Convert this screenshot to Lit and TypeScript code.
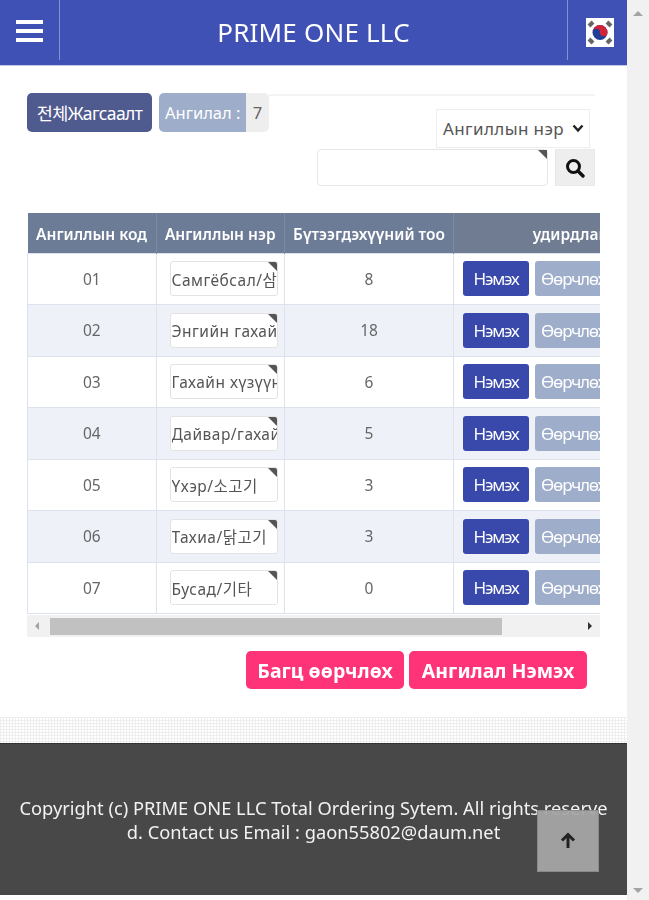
import { LitElement, html, css } from "lit";
import { customElement } from "lit/decorators.js";

const ROWS = [
  ["01", "Самгёбсал/삼겹살", "8"],
  ["02", "Энгийн гахайн мах", "18"],
  ["03", "Гахайн хүзүүний мах", "6"],
  ["04", "Дайвар/гахайн мах", "5"],
  ["05", "Үхэр/소고기", "3"],
  ["06", "Тахиа/닭고기", "3"],
  ["07", "Бусад/기타", "0"],
];

@customElement("app-root")
export class AppRoot extends LitElement {
  static styles = css`
    :host { display: block; height: 900px; overflow: hidden; background: #fff; color: #555;
      font-family: "Noto Sans", "Noto Sans CJK KR", sans-serif; font-size: 15px; }
    * { box-sizing: border-box; }
    .shell { display: flex; height: 900px; filter: blur(0.35px); }
    .page { width: 627px; flex: none; position: relative; }
    .vbar { flex: 1; background: #f1f1f1; display: flex; flex-direction: column; justify-content: space-between; align-items: center; padding: 11px 0 7px; }
    .up { width: 0; height: 0; border: 5px solid transparent; border-top: 0; border-bottom: 5px solid #a3a3a3; }
    .down { width: 0; height: 0; border: 5px solid transparent; border-bottom: 0; border-top: 5px solid #a3a3a3; }

    header { height: 66px; background: #3f51b5; border-bottom: 1px solid #c5c8e4; display: flex; color: #fff; }
    .burger { width: 60px; height: 60px; border-right: 1px solid #8791cf; display: flex; flex-direction: column; gap: 5px; padding: 20px 16px 0; flex: none; }
    .burger span { display: block; height: 4px; background: #fff; }
    .title { flex: 1; text-align: center; font-size: 26px; line-height: 64px; letter-spacing: 0.2px; }
    .lang { width: 60px; height: 60px; border-left: 1px solid #8791cf; flex: none; padding: 18px 0 0 18px; }
    .lang svg { display: block; }

    .top { display: flex; margin: 27px 32px 0 27px; align-items: flex-start; }
    .all { width: 125px; height: 39px; border-radius: 5px; background: #4f5a8f; color: #fff; font-size: 17.5px; line-height: 40px; text-align: center; flex: none; white-space: nowrap; letter-spacing: -0.6px; }
    .badge { margin-left: 7px; width: 110px; height: 39px; border-radius: 5px; display: flex; overflow: hidden; flex: none; line-height: 40px; font-size: 16.5px; }
    .badge b { font-weight: 400; width: 87px; background: #9eadc9; color: #fff; padding-left: 6px; white-space: nowrap; }
    .badge i { font-style: normal; flex: 1; background: #eee; color: #666; text-align: center; }
    .tools { flex: 1; margin-top: 1px; border-top: 2px solid #f4f4f4; display: flex; flex-direction: column; align-items: flex-end; }
    .select { margin: 13px 5px 0 0; width: 154px; height: 39px; border: 1px solid #eee; background: #fff; display: flex; align-items: center; justify-content: space-between; padding: 0 5px 0 6px; font-size: 17px; color: #555; letter-spacing: 0.4px; white-space: nowrap; }
    .search { display: flex; gap: 7px; margin-top: 1px; }
    .search .inp { position: relative; width: 231px; height: 37px; border: 1px solid #e6e6e6; border-radius: 4px; background: #fff; }
    .corner::after { content: ""; position: absolute; top: 0; right: 0; border-left: 9px solid transparent; border-top: 9px solid #555; }
    .go { width: 40px; height: 37px; background: #eee; border: 1px solid #e9e9e9; display: flex; align-items: center; justify-content: center; }

    .scroll { margin: 27px 27px 0; width: 573px; overflow: hidden; }
    table { width: 682px; table-layout: fixed; border-collapse: collapse; }
    th { height: 40px; background: #6c7b96; color: #fff; font-size: 15.5px; font-weight: 600; border-right: 1px solid #7d8aa2; padding: 2px 0 0; white-space: nowrap; }
    th:last-child { background: #6f7c92; border-right: 0; padding-right: 16px; }
    td { height: 51.5px; border: 1px solid #dde3ee; text-align: center; padding: 0; font-size: 15.5px; color: #666; }
    tr:nth-child(even) td { background: #eef2f8; }
    .name { position: relative; display: block; width: 108px; height: 35px; margin: 0 0 0 13px; border: 1px solid #e3e3e3; border-radius: 3px; background: #fff; overflow: hidden; }
    .name input { width: 106px; height: 33px; border: 0; padding: 1px 0 0 1px; background: transparent; font: inherit; font-size: 15.5px; color: #555; outline: none; letter-spacing: 0.5px; }
    .acts { display: flex; gap: 6px; padding-left: 9px; }
    .btn { height: 35px; border-radius: 3px; color: #fff; font-size: 17px; line-height: 35px; text-align: center; letter-spacing: -1.2px; white-space: nowrap; }
    .add { width: 66px; background: #3949ab; }
    .edit { width: 76px; background: #9eadc9; }
    .del { width: 66px; background: #f0427c; }

    .hbar { margin-left: 27px; width: 573px; height: 22px; background: #f1f1f1; display: flex; align-items: center; margin-top: 1px; }
    .larr { margin-left: 8px; border: 4px solid transparent; border-left: 0; border-right: 4px solid #a3a3a3; width: 0; height: 0; }
    .thumb { margin-left: 11px; width: 452px; height: 17px; background: #c1c1c1; }
    .rarr { margin-left: auto; margin-right: 8px; border: 4px solid transparent; border-right: 0; border-left: 4px solid #333; width: 0; height: 0; }

    .actions { display: flex; justify-content: flex-end; gap: 5px; margin: 14px 40px 0 0; }
    .pink { height: 38px; border-radius: 5px; background: #ff3377; color: #fff; font-size: 19.5px; font-weight: 700; line-height: 40px; text-align: center; white-space: nowrap; }
    .p1 { width: 158px; } .p2 { width: 178px; }

    .strip { height: 26px; margin-top: 28px; background-color: #fff;
      background-image: linear-gradient(#eeeeee 1px, transparent 1px), linear-gradient(90deg, #eeeeee 1px, transparent 1px);
      background-size: 3px 3px; }
    footer { height: 152px; background: #484848; color: #f2f2f2; border-top: 1px solid #333; display: flex; align-items: center; justify-content: center; padding: 1px 18px 0; text-align: center; font-size: 18.3px; line-height: 24px; word-break: break-all; }
    .totop { position: absolute; left: 537px; top: 810px; width: 62px; height: 62px; background: rgba(165,165,165,.95); border: 1px solid #8a8a8a; display: flex; align-items: center; justify-content: center; }
  `;

  render() {
    return html`<div class="shell">
      <div class="page">
        <header>
          <div class="burger"><span></span><span></span><span></span></div>
          <div class="title">PRIME ONE LLC</div>
          <div class="lang">
            <svg width="28" height="29" viewBox="0 0 28 29">
              <rect width="28" height="29" fill="#fff"/>
              <circle cx="14" cy="14.500" r="7.500" fill="#1f3f95"/>
              <path d="M6.500 14.500a7.500 7.500 0 0 1 15 0a3.750 3.750 0 0 1-7.500 0a3.750 3.750 0 0 0-7.500 0z" fill="#d3213a"/>
              <g stroke="#666" stroke-width="4">
                <path d="M3 8l4-4M21 4l4 4M3 21l4 4M21 25l4-4"/>
              </g>
            </svg>
          </div>
        </header>
        <div class="top">
          <div class="all">전체Жагсаалт</div>
          <div class="badge"><b>Ангилал :</b><i>7</i></div>
          <div class="tools">
            <div class="select">Ангиллын нэр
              <svg width="12" height="9" viewBox="0 0 12 9"><path d="M1.500 1.500L6 6.500l4.500-5" fill="none" stroke="#222" stroke-width="2.400"/></svg>
            </div>
            <div class="search">
              <div class="inp corner"></div>
              <div class="go">
                <svg width="20" height="20" viewBox="0 0 20 20"><circle cx="8.500" cy="8.500" r="6" fill="none" stroke="#111" stroke-width="3"/><path d="M13 13l5 5" stroke="#111" stroke-width="3.400" stroke-linecap="round"/></svg>
              </div>
            </div>
          </div>
        </div>
        <div class="scroll">
          <table>
            <colgroup><col style="width:128.5px"/><col style="width:128.5px"/><col style="width:169px"/><col style="width:256px"/></colgroup>
            <thead><tr><th>Ангиллын код</th><th>Ангиллын нэр</th><th>Бүтээгдэхүүний тоо</th><th>удирдлага</th></tr></thead>
            <tbody>
              ${ROWS.map(([c, n, q]) => html`<tr>
                <td>${c}</td>
                <td><span class="name corner"><input .value=${n} /></span></td>
                <td>${q}</td>
                <td><div class="acts"><div class="btn add">Нэмэх</div><div class="btn edit">Өөрчлөх</div><div class="btn del">Устгах</div></div></td>
              </tr>`)}
            </tbody>
          </table>
        </div>
        <div class="hbar"><div class="larr"></div><div class="thumb"></div><div class="rarr"></div></div>
        <div class="actions"><div class="pink p1">Багц өөрчлөх</div><div class="pink p2">Ангилал Нэмэх</div></div>
        <div class="strip"></div>
        <footer>Copyright (c) PRIME ONE LLC Total Ordering Sytem. All rights reserved. Contact us Email : gaon55802@daum.net</footer>
        <div class="totop">
          <svg width="18" height="18" viewBox="0 0 18 18"><path d="M9 16V3M3 8.500L9 2.500l6 6" fill="none" stroke="#222" stroke-width="3"/></svg>
        </div>
      </div>
      <div class="vbar"><div class="up"></div><div class="down"></div></div>
    </div>`;
  }
}
